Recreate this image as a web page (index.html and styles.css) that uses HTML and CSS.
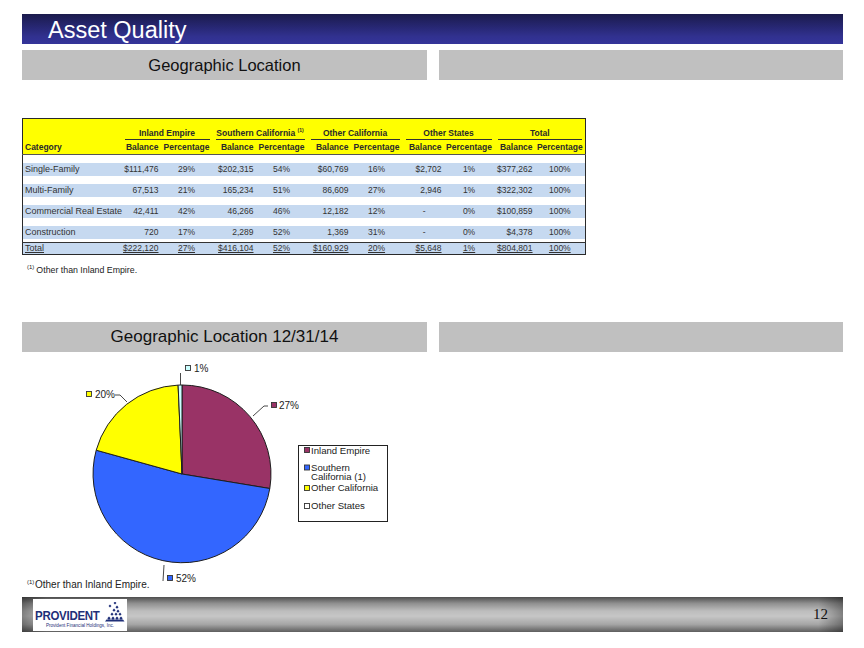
FILE: index.html
```html
<!DOCTYPE html>
<html lang="en">
<head>
<meta charset="utf-8">
<title>Asset Quality</title>
<link rel="stylesheet" href="styles.css">
</head>
<body>
<div class="slide">
  <header class="title-bar"><h1>Asset Quality</h1></header>

  <div class="section-heads">
    <div class="head">Geographic Location</div>
    <div class="head"></div>
  </div>

  <table class="geo">
    <colgroup>
      <col class="w-cat">
      <col class="w-ie-b"><col class="w-ie-p">
      <col class="w-sc-b"><col class="w-sc-p">
      <col class="w-oc-b"><col class="w-oc-p">
      <col class="w-os-b"><col class="w-os-p">
      <col class="w-t-b"><col class="w-t-p">
    </colgroup>
    <thead>
      <tr class="group-row">
        <th></th>
        <th colspan="2"><span class="grp">Inland Empire</span></th>
        <th colspan="2"><span class="grp">Southern California <sup>(1)</sup></span></th>
        <th colspan="2"><span class="grp">Other California</span></th>
        <th colspan="2"><span class="grp">Other States</span></th>
        <th colspan="2"><span class="grp">Total</span></th>
      </tr>
      <tr class="sub-row">
        <th class="cat">Category</th>
        <th class="bal">Balance</th><th class="pct">Percentage</th>
        <th class="bal">Balance</th><th class="pct">Percentage</th>
        <th class="bal">Balance</th><th class="pct">Percentage</th>
        <th class="bal">Balance</th><th class="pct">Percentage</th>
        <th class="bal">Balance</th><th class="pct">Percentage</th>
      </tr>
    </thead>
    <tbody>
      <tr class="spacer"><td colspan="11"></td></tr>
      <tr class="data">
        <td class="cat">Single-Family</td>
        <td class="bal">$111,476</td><td class="pct">29%</td>
        <td class="bal">$202,315</td><td class="pct">54%</td>
        <td class="bal">$60,769</td><td class="pct">16%</td>
        <td class="bal">$2,702</td><td class="pct">1%</td>
        <td class="bal">$377,262</td><td class="pct">100%</td>
      </tr>
      <tr class="spacer"><td colspan="11"></td></tr>
      <tr class="data">
        <td class="cat">Multi-Family</td>
        <td class="bal">67,513</td><td class="pct">21%</td>
        <td class="bal">165,234</td><td class="pct">51%</td>
        <td class="bal">86,609</td><td class="pct">27%</td>
        <td class="bal">2,946</td><td class="pct">1%</td>
        <td class="bal">$322,302</td><td class="pct">100%</td>
      </tr>
      <tr class="spacer"><td colspan="11"></td></tr>
      <tr class="data">
        <td class="cat">Commercial Real Estate</td>
        <td class="bal">42,411</td><td class="pct">42%</td>
        <td class="bal">46,266</td><td class="pct">46%</td>
        <td class="bal">12,182</td><td class="pct">12%</td>
        <td class="bal dash">-</td><td class="pct">0%</td>
        <td class="bal">$100,859</td><td class="pct">100%</td>
      </tr>
      <tr class="spacer"><td colspan="11"></td></tr>
      <tr class="data">
        <td class="cat">Construction</td>
        <td class="bal">720</td><td class="pct">17%</td>
        <td class="bal">2,289</td><td class="pct">52%</td>
        <td class="bal">1,369</td><td class="pct">31%</td>
        <td class="bal dash">-</td><td class="pct">0%</td>
        <td class="bal">$4,378</td><td class="pct">100%</td>
      </tr>
      <tr class="spacer short"><td colspan="11"></td></tr>
      <tr class="data total">
        <td class="cat">Total</td>
        <td class="bal">$222,120</td><td class="pct">27%</td>
        <td class="bal">$416,104</td><td class="pct">52%</td>
        <td class="bal">$160,929</td><td class="pct">20%</td>
        <td class="bal">$5,648</td><td class="pct">1%</td>
        <td class="bal">$804,801</td><td class="pct">100%</td>
      </tr>
    </tbody>
  </table>

  <p class="footnote"><sup>(1)</sup>Other than Inland Empire.</p>

  <div class="section-heads second">
    <div class="head">Geographic Location 12/31/14</div>
    <div class="head"></div>
  </div>

  <div class="chart">
    <svg class="pie-chart" width="421" height="244" viewBox="22 352 421 244" xmlns="http://www.w3.org/2000/svg">
      <g class="slices" stroke="#1e1e1e" stroke-width="1" stroke-linejoin="round">
        <path d="M182,475 L182,386 A89,89 0 0,1 269.8,489.5 Z" fill="#993366"/>
        <path d="M182,475 L269.8,489.5 A89,89 0 1,1 96.2,451.2 Z" fill="#3366ff"/>
        <path d="M182,475 L96.2,451.2 A89,89 0 0,1 178.1,386.1 Z" fill="#ffff00"/>
        <path d="M182,475 L178.1,386.1 A89,89 0 0,1 182,386 Z" fill="#ccffff"/>
      </g>
      <g class="leaders" fill="none" stroke="#333" stroke-width="0.9">
        <polyline points="180.5,374 180.5,386"/>
        <polyline points="115,396 120,396 127,403"/>
        <polyline points="268,407 264,407 253,417"/>
        <polyline points="164,566 163,582"/>
      </g>
      <g class="labels" font-family="'Liberation Sans', Arial, sans-serif" font-size="10" fill="#222">
        <rect x="185.5" y="366.5" width="5" height="5" fill="#ccffff" stroke="#333" stroke-width="0.9"/>
        <text x="194" y="373">1%</text>
        <rect x="86.5" y="392.5" width="5" height="5" fill="#ffff00" stroke="#333" stroke-width="0.9"/>
        <text x="95" y="399">20%</text>
        <rect x="271.5" y="403.5" width="5" height="5" fill="#993366" stroke="#333" stroke-width="0.9"/>
        <text x="279" y="410">27%</text>
        <rect x="167.5" y="576.5" width="5" height="5" fill="#3366ff" stroke="#333" stroke-width="0.9"/>
        <text x="176" y="583">52%</text>
      </g>
      <g class="legend" font-family="'Liberation Sans', Arial, sans-serif" font-size="9.6" fill="#222">
        <rect x="298.5" y="446.5" width="89" height="76" fill="#fff" stroke="#222" stroke-width="1"/>
        <rect x="304.5" y="448.5" width="5" height="5" fill="#993366" stroke="#333" stroke-width="0.9"/>
        <text x="311" y="454.5">Inland Empire</text>
        <rect x="304.5" y="466" width="5" height="5" fill="#3366ff" stroke="#333" stroke-width="0.9"/>
        <text x="311" y="471.5">Southern</text>
        <text x="311" y="481">California (1)</text>
        <rect x="304.5" y="486.5" width="5" height="5" fill="#ffff00" stroke="#333" stroke-width="0.9"/>
        <text x="311" y="492">Other California</text>
        <rect x="304.5" y="504.5" width="5" height="5" fill="#fff" stroke="#333" stroke-width="0.9"/>
        <text x="311" y="510">Other States</text>
      </g>
      <text class="chart-note" x="27" y="589" font-family="'Liberation Sans', Arial, sans-serif" font-size="10" fill="#222"><tspan font-size="6" dy="-4">(1)</tspan><tspan x="35" dy="4">Other than Inland Empire.</tspan></text>
    </svg>
  </div>

  <footer class="footer-bar">
    <div class="logo">
      <div class="logo-top">
        <span class="logo-name">PROVIDENT</span>
        <svg class="logo-mark" width="24" height="20" viewBox="0 0 24 20" xmlns="http://www.w3.org/2000/svg">
          <g fill="#1f2f78">
            <rect x="13" y="0" width="2" height="2" transform="rotate(45 14 1)"/>
            <rect x="8" y="3" width="2" height="2" transform="rotate(45 9 4)"/>
            <rect x="15" y="4" width="2.2" height="2.2" transform="rotate(45 16 5)"/>
            <rect x="12" y="7" width="2.2" height="2.2" transform="rotate(45 13 8)"/>
            <rect x="16" y="8" width="2.2" height="2.2" transform="rotate(45 17 9)"/>
            <rect x="10" y="11" width="2.2" height="2.2" transform="rotate(45 11 12)"/>
            <rect x="14" y="11" width="2.2" height="2.2" transform="rotate(45 15 12)"/>
            <rect x="18" y="11" width="2.2" height="2.2" transform="rotate(45 19 12)"/>
            <rect x="7" y="15" width="2.4" height="2.4" transform="rotate(45 8 16)"/>
            <rect x="11" y="15" width="2.4" height="2.4" transform="rotate(45 12 16)"/>
            <rect x="15" y="15" width="2.4" height="2.4" transform="rotate(45 16 16)"/>
            <rect x="19" y="15" width="2.4" height="2.4" transform="rotate(45 20 16)"/>
            <polygon points="4,19.5 23.5,19.5 22,17.5 5.5,17.5"/>
          </g>
        </svg>
      </div>
      <div class="logo-sub">Provident Financial Holdings, Inc.</div>
    </div>
    <span class="page-no">12</span>
  </footer>
</div>
</body>
</html>
```

FILE: styles.css
```css
html, body {
  margin: 0;
  padding: 0;
  background: #ffffff;
}

.slide {
  width: 821px;
  padding: 14px 21px 0 22px;
  font-family: "Liberation Sans", Arial, sans-serif;
  color: #222;
}

/* Title bar */
.title-bar {
  height: 30px;
  background: linear-gradient(to bottom, #1b1b4c 0%, #262670 40%, #31318f 75%, #34349a 100%);
}

.title-bar h1 {
  margin: 0;
  padding-left: 26px;
  font-size: 23.5px;
  font-weight: normal;
  line-height: 32px;
  color: #ffffff;
}

/* Gray section headers */
.section-heads {
  margin-top: 6px;
  display: grid;
  grid-template-columns: 405px 404px;
  column-gap: 12px;
  height: 29px;
}

.section-heads.second {
  margin-top: 49px;
}

.head {
  background: #c0c0c0;
  text-align: center;
  font-size: 16.5px;
  line-height: 30px;
  color: #111;
}

.second .head {
  font-size: 17px;
}

/* Table */
.geo {
  margin-top: 39px;
  width: 564px;
  table-layout: fixed;
  border-collapse: collapse;
  border: 1px solid #2a2a2a;
  font-size: 8.5px;
  line-height: 1;
}

.w-cat { width: 99px; }
.w-ie-b { width: 39px; }
.w-ie-p { width: 52px; }
.w-sc-b { width: 43px; }
.w-sc-p { width: 52px; }
.w-oc-b { width: 43px; }
.w-oc-p { width: 52px; }
.w-os-b { width: 41px; }
.w-os-p { width: 51px; }
.w-t-b { width: 40px; }
.w-t-p { width: 51px; }

.geo th,
.geo td {
  padding: 0;
  white-space: nowrap;
  overflow: visible;
}

.geo thead tr {
  background: #ffff00;
}

.group-row {
  height: 22px;
}

.group-row th {
  vertical-align: bottom;
  font-weight: bold;
  color: #2a2a2a;
}

.grp {
  display: block;
  margin: 0 3px 1px 3px;
  padding-bottom: 1px;
  border-bottom: 1px solid #333;
  text-align: center;
}

.grp sup {
  font-size: 5px;
  vertical-align: 4px;
}

.sub-row {
  height: 14px;
  border-bottom: 1px solid #555;
}

.sub-row th {
  font-weight: bold;
  color: #2a2a2a;
  vertical-align: middle;
}

.cat {
  text-align: left;
  padding-left: 2px !important;
}

.bal {
  text-align: right;
  padding-right: 2px !important;
}

.pct {
  text-align: center;
}

.geo td.cat {
  font-size: 9px;
}

.bal.dash {
  padding-right: 18px !important;
}

.spacer {
  height: 8px;
  background: #ffffff;
}

.spacer.short {
  height: 4px;
}

.data {
  height: 13px;
  background: #c6d9f0;
  color: #333;
}

.data td {
  vertical-align: middle;
}

.data.total {
  height: 12px;
  border-top: 1px solid #333;
}

.data.total td {
  text-decoration: underline;
  text-underline-offset: 1px;
}

/* Footnote */
.footnote {
  margin: 6px 0 0 5px;
  height: 12px;
  font-size: 8.8px;
  line-height: 12px;
  color: #222;
}

.footnote sup {
  font-size: 6px;
  vertical-align: 4px;
  margin-right: 2px;
}

/* Chart */
.chart {
  height: 244px;
}

.pie-chart {
  display: block;
}

/* Footer */
.footer-bar {
  margin-top: 2px;
  height: 35px;
  display: flex;
  align-items: center;
  justify-content: space-between;
  background:
    linear-gradient(to right, rgba(0,0,0,0.35), rgba(0,0,0,0) 3%, rgba(0,0,0,0) 97%, rgba(0,0,0,0.35)),
    linear-gradient(to bottom, #4e4e4e 0%, #8f8f8f 18%, #bdbdbd 40%, #c6c6c6 55%, #a6a6a6 78%, #5e5e5e 100%);
}

.logo {
  margin-left: 11px;
  width: 94px;
  height: 32px;
  background: #ffffff;
  display: flex;
  flex-direction: column;
  align-items: center;
  box-sizing: border-box;
  padding-top: 1px;
}

.logo-top {
  display: flex;
  align-items: flex-end;
  height: 23px;
}

.logo-name {
  font-family: "Liberation Sans", Arial, sans-serif;
  font-weight: bold;
  font-size: 12.5px;
  line-height: 13px;
  color: #1f2f78;
  letter-spacing: -0.3px;
  transform: scaleX(0.92);
  transform-origin: left bottom;
  margin-right: -4px;
}

.logo-mark {
  display: block;
  margin-bottom: 1px;
}

.logo-sub {
  font-size: 4.6px;
  line-height: 6px;
  color: #1f2f78;
  white-space: nowrap;
}

.page-no {
  margin-right: 15px;
  font-family: "Liberation Serif", "Times New Roman", serif;
  font-size: 15px;
  color: #111;
}
```
